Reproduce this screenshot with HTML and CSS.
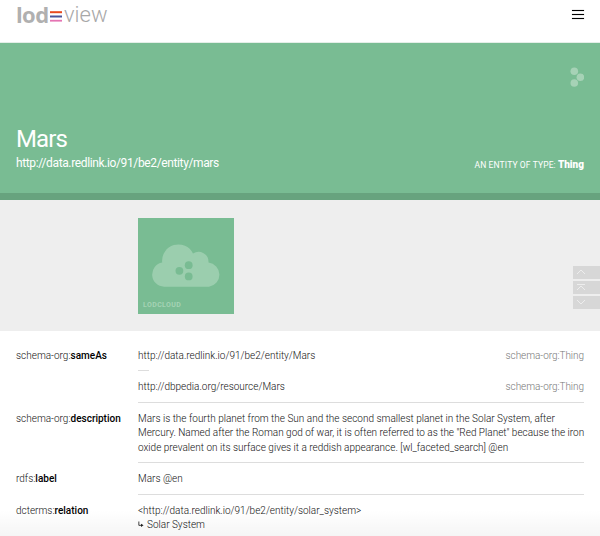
FILE: index.html
```html
<!DOCTYPE html>
<html lang="en">
<head>
<meta charset="utf-8">
<title>Mars - LodView</title>
<link rel="stylesheet" href="styles.css">
</head>
<body>
<header class="topbar">
  <div class="logo"><span class="logo-lod">lod</span><svg class="logo-bars" viewBox="0 0 12 12"><path class="bar-red" d="M0 0.200h12v2H0z"/><path class="bar-blue" d="M0 4.500h12v2H0z"/><path class="bar-pink" d="M0 8.800h12v1.800H0z"/></svg><span class="logo-view">view</span></div>
  <div class="menu"><i></i><i></i><i></i></div>
</header>
<section class="hero">
  <svg class="dots" viewBox="0 0 14 20"><circle cx="4.3" cy="4.2" r="3.8"/><circle cx="10.4" cy="10.2" r="3.8"/><circle cx="4.3" cy="16" r="3.8"/></svg>
  <div class="hero-text">
    <div>
      <h1>Mars</h1>
      <div class="uri">http://data.redlink.io/91/be2/entity/mars</div>
    </div>
    <div class="type"><span class="type-label">AN ENTITY OF TYPE:</span> <b>Thing</b></div>
  </div>
</section>
<section class="widgets">
  <div class="tile">
    <svg class="cloud" viewBox="0 0 96 96">
      <path class="cloud-shape" d="M26 68.700A12.200 12.200 0 0 1 24.200 44.500A16.300 16.300 0 0 1 55 35.500A10 10 0 0 1 70.500 44.500A12.200 12.200 0 0 1 71 68.700Z"/>
      <circle cx="50.700" cy="47.200" r="3.900"/><circle cx="41.400" cy="52.800" r="3.900"/><circle cx="50.700" cy="58.400" r="3.900"/>
    </svg>
    <span class="tile-label">LODCLOUD</span>
  </div>
  <nav class="jump">
    <span><svg viewBox="0 0 10 8"><path d="M1 6L5 2L9 6"/></svg></span>
    <span><svg viewBox="0 0 10 8"><path d="M1 1.500H9M1 7L5 3L9 7"/></svg></span>
    <span><svg viewBox="0 0 10 8"><path d="M1 2L5 6L9 2"/></svg></span>
  </nav>
</section>
<main class="props">
  <div class="row same">
    <div class="name">schema-org:<b>sameAs</b></div>
    <div class="value">
      <div class="link"><span>http://data.redlink.io/91/be2/entity/Mars</span><span class="kind">schema-org:Thing</span></div>
      <div class="short-rule"></div>
      <div class="link"><span>http://dbpedia.org/resource/Mars</span><span class="kind">schema-org:Thing</span></div>
    </div>
  </div>
  <div class="row description">
    <div class="name">schema-org:<b>description</b></div>
    <div class="value">Mars is the fourth planet from the Sun and the second smallest planet in the Solar System, after<br>Mercury. Named after the Roman god of war, it is often referred to as the "Red Planet" because the iron<br>oxide prevalent on its surface gives it a reddish appearance. [wl_faceted_search] @en</div>
  </div>
  <div class="row">
    <div class="name">rdfs:<b>label</b></div>
    <div class="value">Mars @en</div>
  </div>
  <div class="row last">
    <div class="name">dcterms:<b>relation</b></div>
    <div class="value">&lt;http://data.redlink.io/91/be2/entity/solar_system&gt;<br><svg class="arrow" viewBox="0 0 7 8"><path class="arrow-line" d="M1 0.500V5H4"/><path d="M3.500 3L6.500 5L3.500 7Z"/></svg>Solar System</div>
  </div>
</main>
<div class="fade"></div>
</body>
</html>
```
FILE: styles.css
```css
* { box-sizing: border-box; }
body {
  position: relative;
  margin: 0;
  width: 600px;
  height: 536px;
  overflow: hidden;
  background: #fff;
  color: #111;
  font: 300 10px/14.3px Roboto, sans-serif;
}
b { font-weight: 500; color: #000; }
.topbar {
  display: flex;
  justify-content: space-between;
  height: 43px;
  padding: 0 16px;
  border-bottom: 1px solid #e4eee8;
}
.logo {
  display: flex;
  height: 28px;
  color: #b0b0b0;
  font: 300 22px/28px "Open Sans", sans-serif;
}
.logo-lod { width: 33px; font-weight: 700; letter-spacing: -0.6px; }
.logo-bars { width: 12px; height: 12px; margin: 11px 2px 0 1px; }
.bar-red { fill: #e8491d; }
.bar-blue { fill: #4b5598; }
.bar-pink { fill: #e574b3; }
.logo-view { color: #a8a8a8; font-family: Roboto, sans-serif; line-height: 30px; }
.menu { display: flex; flex-direction: column; gap: 2px; width: 12px; margin-top: 10px; }
.menu i { height: 1px; margin-bottom: 1px; background: #000; box-shadow: 0 0 1px #555; }
.hero {
  display: flex;
  flex-direction: column;
  justify-content: space-between;
  height: 157px;
  padding: 24px 16px 20px;
  background: #79bc93;
  border-bottom: 7px solid #67a37e;
  color: #fff;
}
.dots { align-self: flex-end; width: 14px; height: 20px; fill: #a6d2b6; }
.hero-text { display: flex; justify-content: space-between; align-items: flex-end; }
h1 { margin: 0; font: 400 24px/28px Roboto, sans-serif; letter-spacing: -0.85px; }
.uri { height: 20px; font-size: 12px; line-height: 20px; font-weight: 400; letter-spacing: -0.370px; }
.type { margin-bottom: 1px; font-size: 8.500px; line-height: 14px; font-weight: 400; }
.type-label { letter-spacing: 0.120px; }
.type b { color: #fff; font-size: 10px; font-weight: 900; }
.widgets {
  display: flex;
  justify-content: space-between;
  height: 131px;
  padding: 18px 0 0 138px;
  background: #eee;
}
.tile { position: relative; width: 96px; height: 96px; background: #79bc93; }
.cloud { display: block; width: 96px; height: 96px; fill: #79bc93; }
.cloud-shape { fill: #9bceae; }
.tile-label { position: absolute; left: 5px; bottom: 4px; color: #a5d3b5; font-size: 7px; line-height: 9px; font-weight: 700; letter-spacing: 0.400px; }
.jump { display: flex; flex-direction: column; gap: 2px; width: 27px; padding-top: 48px; }
.jump span { height: 13px; padding: 2px 0 0 3px; background: #d7d7d7; }
.jump svg { display: block; width: 10px; height: 8px; fill: none; stroke: #ededed; stroke-width: 1; }
.props { padding: 0 16px; white-space: nowrap; }
.row { display: flex; }
.name { width: 122px; padding-top: 9px; }
.value { width: 446px; height: 32px; padding-top: 9px; border-bottom: 1px solid #ddd; }
.same .name, .same .value { padding-top: 18px; }
.same .value { height: 72px; }
.description .value { height: 60px; }
.last .value { height: 48px; border: 0; }
.link { display: flex; justify-content: space-between; }
.kind { color: #777; letter-spacing: -0.050px; }
.short-rule { width: 11px; height: 1px; margin: 7px 0 9px; background: #ddd; }
.arrow { width: 6px; height: 7px; margin-right: 3px; fill: #222; }
.arrow-line { fill: none; stroke: #222; stroke-width: 1; }
.fade {
  position: absolute;
  left: 0;
  right: 0;
  bottom: 0;
  height: 26px;
  background: linear-gradient(rgba(0, 0, 0, 0), rgba(0, 0, 0, 0.040));
}
```
